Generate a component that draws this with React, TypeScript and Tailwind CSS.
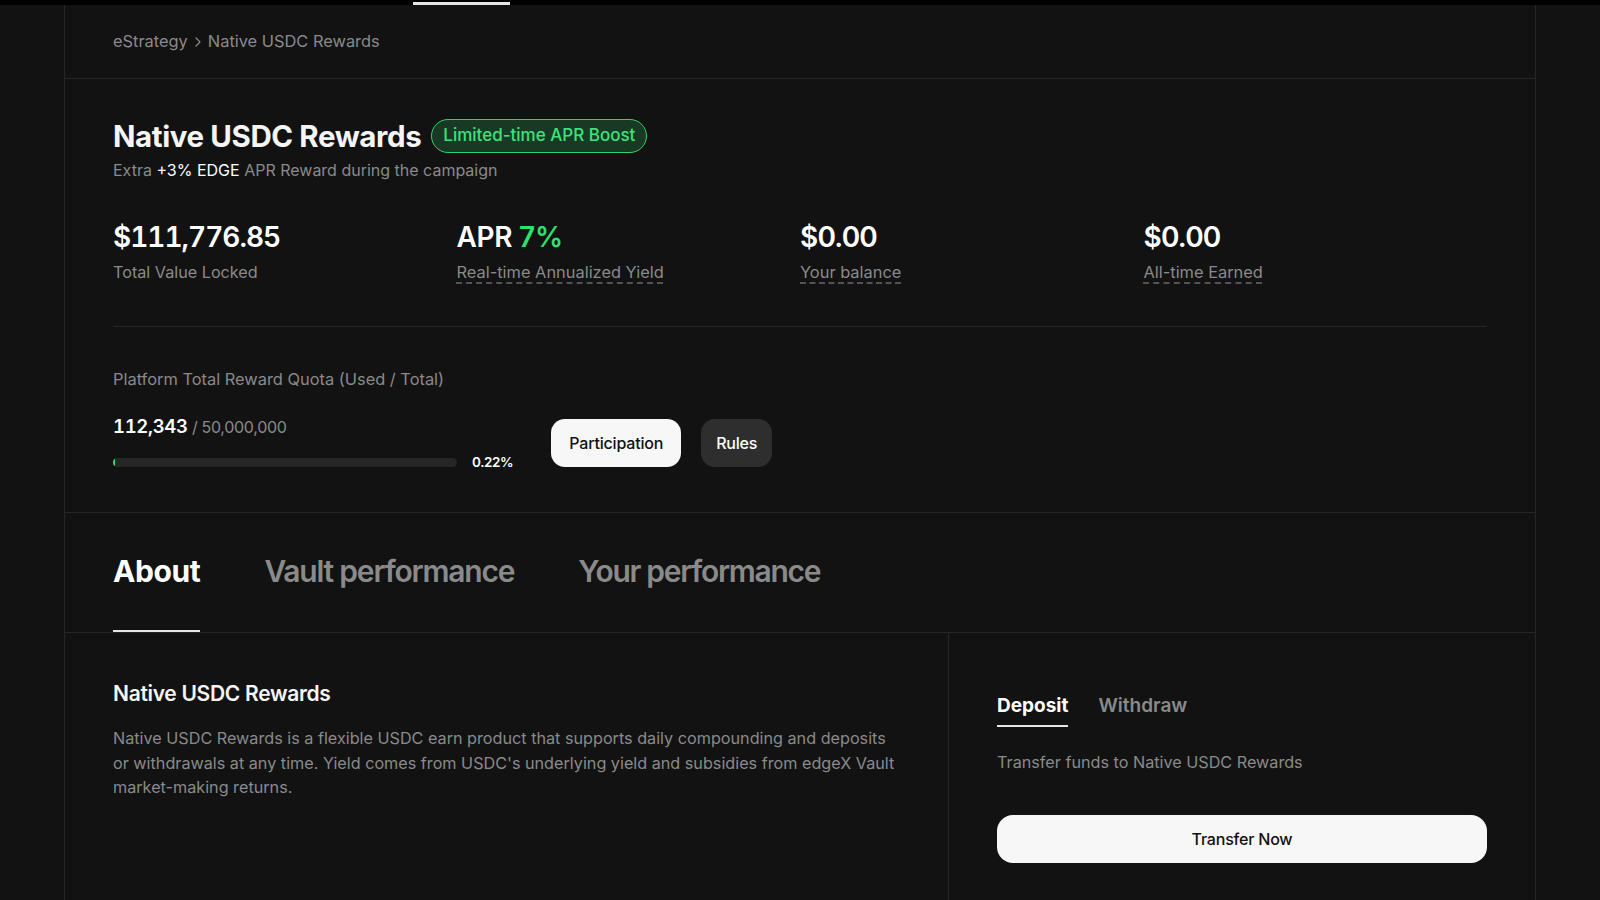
import React from "react";

export default function App() {
  return (
    <div className="min-h-screen bg-[#121212] font-['Inter',sans-serif] text-white">
      {/* top nav remnant */}
      <div className="h-[5px] bg-black flex items-end pl-[413px]">
        <div className="h-[3px] w-[97px] bg-[#e5e5e5]" />
      </div>

      <div className="mx-auto w-[1472px] border-x border-[#262626]">
        {/* breadcrumb */}
        <div className="h-[74px] border-b border-[#262626] px-12 flex items-center text-[16.4px] text-[#8a8a8a]">
          <span>eStrategy</span>
          <svg width="14" height="14" viewBox="0 0 14 14" className="mx-[3px]" fill="none">
            <path d="M5 3l4 4-4 4" stroke="#8a8a8a" strokeWidth="1.2" strokeLinecap="round" strokeLinejoin="round" />
          </svg>
          <span>Native USDC Rewards</span>
        </div>

        {/* header */}
        <div className="px-12 pt-[39px] pb-[45px] border-b border-[#262626]">
          <div className="flex items-center gap-[10px] h-9">
            <h1 className="text-[29.5px] font-bold leading-9 tracking-[-0.4px] text-[#f5f5f5]">Native USDC Rewards</h1>
            <span className="h-[34px] px-[11px] flex items-center rounded-full border-[1.5px] border-[#2bd46a] bg-[#183a24] text-[#3ee27c] text-[17px] font-medium">
              Limited-time APR Boost
            </span>
          </div>
          <p className="mt-[4px] text-[16px] leading-6 text-[#8a8a8a]">
            Extra <span className="text-white">+3% EDGE</span> APR Reward during the campaign
          </p>

          <div className="mt-[37px] grid grid-cols-4 pb-[42px] border-b border-[#262626]">
            <div>
              <div className="text-[28px] font-semibold leading-9 tracking-[-1px] tabular-nums">$111,776.85</div>
              <div className="mt-[5px] text-[16.2px] leading-6 text-[#8a8a8a]">Total Value Locked</div>
            </div>
            <div>
              <div className="text-[28px] font-semibold leading-9 tracking-[-0.3px]">
                APR <span className="text-[#2ee06e]">7%</span>
              </div>
              <div className="mt-[5px] text-[16.4px] leading-6 text-[#8a8a8a]">
                <span className="underline decoration-dashed decoration-[#6a6a6a] underline-offset-[5px]">Real-time Annualized Yield</span>
              </div>
            </div>
            <div>
              <div className="text-[28px] font-semibold leading-9 tracking-[-0.8px]">$0.00</div>
              <div className="mt-[5px] text-[16.4px] leading-6 text-[#8a8a8a]">
                <span className="underline decoration-dashed decoration-[#6a6a6a] underline-offset-[5px]">Your balance</span>
              </div>
            </div>
            <div>
              <div className="text-[28px] font-semibold leading-9 tracking-[-0.8px]">$0.00</div>
              <div className="mt-[5px] text-[16.4px] leading-6 text-[#8a8a8a]">
                <span className="underline decoration-dashed decoration-[#6a6a6a] underline-offset-[5px]">All-time Earned</span>
              </div>
            </div>
          </div>

          <div className="mt-10 text-[16.4px] leading-6 text-[#8a8a8a]">
            Platform Total Reward Quota (Used / Total)
          </div>
          <div className="mt-[22px] flex items-end gap-[38px]">
            <div>
              <div className="leading-[26px] tracking-[-0.3px]">
                <span className="text-[18.5px] font-semibold text-white tabular-nums">112,343</span>
                <span className="text-[16px] text-[#8a8a8a]"> / 50,000,000</span>
              </div>
              <div className="mt-[18px] flex items-center gap-[15px]">
                <div className="h-[9px] w-[344px] rounded-full bg-[#262626] overflow-hidden">
                  <div className="h-full bg-[#2ee06e] rounded-full" style={{ width: "2px" }} />
                </div>
                <span className="text-[13.5px] font-semibold leading-[9px] tracking-[-0.4px] text-white">0.22%</span>
              </div>
            </div>
            <div className="flex gap-5">
              <button className="h-12 w-[130px] rounded-[14px] bg-[#f7f7f7] text-[#111] text-[16px] font-medium tracking-[-0.2px]">
                Participation
              </button>
              <button className="h-12 w-[71px] rounded-[14px] bg-[#2e2e2e] text-white text-[16px] font-medium tracking-[-0.2px]">
                Rules
              </button>
            </div>
          </div>
        </div>

        {/* tabs */}
        <div className="px-12 pt-10 flex gap-[64px] border-b border-[#262626]">
          <div className="pb-[41px] border-b-2 border-[#e5e5e5] text-[30px] font-bold leading-9 tracking-[-0.4px] text-white">About</div>
          <div className="pb-[41px] border-b-2 border-transparent text-[30px] font-semibold leading-9 tracking-[-1.2px] text-[#8a8a8a]">Vault performance</div>
          <div className="pb-[41px] border-b-2 border-transparent text-[30px] font-semibold leading-9 tracking-[-1.3px] text-[#8a8a8a]">Your performance</div>
        </div>

        {/* bottom */}
        <div className="flex min-h-[300px]">
          <div className="w-[884px] border-r border-[#262626] px-12 pt-[47px]">
            <h3 className="text-[21px] font-semibold leading-7 tracking-[-0.3px] text-[#f5f5f5]">Native USDC Rewards</h3>
            <p className="mt-[18px] text-[16.2px] leading-[24.5px] text-[#8a8a8a]">
              Native USDC Rewards is a flexible USDC earn product that supports daily compounding and deposits or withdrawals at any time. Yield comes from USDC's underlying yield and subsidies from edgeX Vault market-making returns.
            </p>
          </div>
          <div className="flex-1 px-12 pt-[60px]">
            <div className="flex gap-[30px]">
              <div className="pb-[6px] border-b-2 border-[#e5e5e5] text-[19px] font-bold leading-[26px] text-white">Deposit</div>
              <div className="pb-[6px] border-b-2 border-transparent text-[19px] font-semibold leading-[26px] text-[#8a8a8a]">Withdraw</div>
            </div>
            <p className="mt-[23px] text-[16.2px] leading-6 text-[#8a8a8a]">Transfer funds to Native USDC Rewards</p>
            <button className="mt-[41px] h-12 w-full rounded-[16px] bg-[#f7f7f7] text-[#111] text-[16px] font-medium tracking-[-0.2px]">
              Transfer Now
            </button>
          </div>
        </div>
      </div>
    </div>
  );
}
